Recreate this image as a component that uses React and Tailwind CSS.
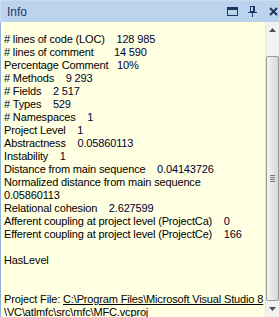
import React from "react";

const rows = [
  ["# lines of code (LOC)", "    ", "128 985"],
  ["# lines of comment", "       ", "14 590"],
  ["Percentage Comment", "   ", "10%"],
  ["# Methods", "    ", "9 293"],
  ["# Fields", "    ", "2 517"],
  ["# Types", "    ", "529"],
  ["# Namespaces", "    ", "1"],
  ["Project Level", "    ", "1"],
  ["Abstractness", "    ", "0.05860113"],
  ["Instability", "    ", "1"],
  ["Distance from main sequence", "    ", "0.04143726"],
  ["Normalized distance from main sequence", "", ""],
  ["0.05860113", "", ""],
  ["Relational cohesion", "    ", "2.627599"],
  ["Afferent coupling at project level (ProjectCa)", "    ", "0"],
  ["Efferent coupling at project level (ProjectCe)", "    ", "166"],
  ["", "", ""],
  ["HasLevel", "", ""],
  ["", "", ""],
  ["", "", ""],
];

export default function App() {
  return (
    <div
      className="w-[279px] h-[317px] overflow-hidden flex flex-col bg-[#ffffe1]"
      style={{ fontFamily: '"Liberation Sans", Arial, sans-serif' }}
    >
      <div className="h-[22px] shrink-0 flex items-center justify-between bg-[#bcd3ee] border-t border-l border-[#c9dcf2] pl-[6px] pr-[1px]">
        <span className="text-[12px] text-[#1e3a63] leading-none">Info</span>
        <div className="flex items-center text-[#15305c]">
          <svg width="11" height="9" viewBox="0 0 11 9">
            <rect x="0.5" y="0.5" width="10" height="8" fill="none" stroke="#1b3866" />
            <rect x="0" y="0" width="11" height="3" fill="#1b3866" />
          </svg>
          <svg width="9" height="11" viewBox="0 0 9 11" className="ml-[10px]">
            <rect x="2.5" y="0.5" width="4" height="5" fill="none" stroke="#1b3866" />
            <rect x="5" y="0" width="2" height="6" fill="#1b3866" />
            <rect x="0" y="6" width="9" height="1" fill="#1b3866" />
            <rect x="4" y="7" width="1" height="4" fill="#1b3866" />
          </svg>
          <svg width="9" height="9" viewBox="0 0 9 9" className="ml-[12px]">
            <path d="M1 1 L8 8 M8 1 L1 8" stroke="#1b3866" strokeWidth="2" />
          </svg>
        </div>
      </div>
      <div className="flex-1 flex min-h-0 border-l border-[#8fb1de]">
        <div className="flex-1 min-w-0 pt-[11px] pl-[3px] text-[11px] leading-[13px] text-black whitespace-pre tracking-[-0.15px] overflow-hidden">
          {rows.map((r, i) => (
            <div key={i} className="h-[13px]">
              {r[0]}
              {r[1]}
              {r[2] && <span className="text-[#000030]">{r[2]}</span>}
            </div>
          ))}
          <div className="h-[13px]">
            Project File: <span className="underline">C:\Program Files\Microsoft Visual Studio 8</span>
          </div>
          <div className="h-[13px]">
            <span className="underline">\VC\atlmfc\src\mfc\MFC.vcproj</span>
          </div>
        </div>
        <div className="w-[14px] shrink-0 flex flex-col bg-[#f2f2f2] border-l border-[#e6e6e6]">
          <div className="h-[16px] flex items-center justify-center">
            <svg width="7" height="4" viewBox="0 0 7 4">
              <path d="M0 4 L3.5 0 L7 4 Z" fill="#505050" />
            </svg>
          </div>
          <div className="h-[18px]" />
          <div className="flex-1 rounded-[2px] border border-[#9a9a9a] bg-gradient-to-r from-[#f4f4f4] to-[#d8d8d8] flex items-center justify-center">
            <div className="flex flex-col gap-[1px]">
              <div className="w-[5px] h-[1px] bg-[#7a7a7a]" />
              <div className="w-[5px] h-[1px] bg-[#7a7a7a]" />
              <div className="w-[5px] h-[1px] bg-[#7a7a7a]" />
              <div className="w-[5px] h-[1px] bg-[#7a7a7a]" />
            </div>
          </div>
          <div className="h-[16px] flex items-center justify-center">
            <svg width="7" height="4" viewBox="0 0 7 4">
              <path d="M0 0 L7 0 L3.5 4 Z" fill="#505050" />
            </svg>
          </div>
        </div>
      </div>
    </div>
  );
}
